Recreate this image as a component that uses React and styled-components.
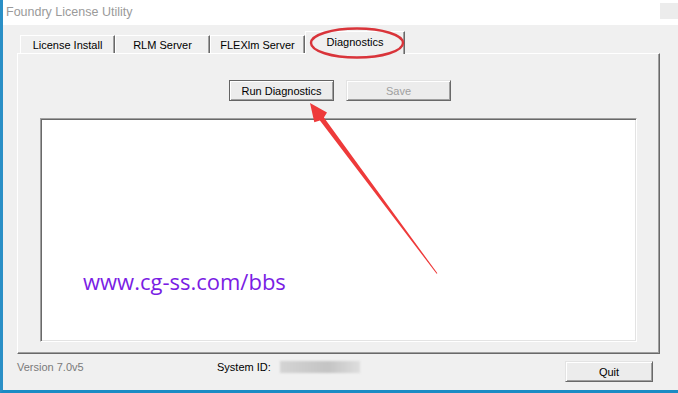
import styled, { createGlobalStyle } from 'styled-components';

const tabs = ['License Install', 'RLM Server', 'FLEXlm Server', 'Diagnostics'];

const App = () => {
  return (
    <>
      <GlobalStyle />
      <Window>
        <TitleBar>
          <Title>Foundry License Utility</Title>
          <CloseBox />
        </TitleBar>

        <Body>
          <TabStrip>
            {tabs.map((t) => (
              <Tab key={t} $active={t === 'Diagnostics'}>
                {t}
              </Tab>
            ))}
          </TabStrip>

          <Panel>
            <ButtonRow>
              <PushButton $default>Run Diagnostics</PushButton>
              <PushButton disabled>Save</PushButton>
            </ButtonRow>
            <OutputArea />
          </Panel>

          <Footer>
            <Version>Version 7.0v5</Version>
            <Label>System ID:</Label>
            <Blurred />
            <QuitButton>Quit</QuitButton>
          </Footer>
        </Body>

        <Watermark>www.cg-ss.com/bbs</Watermark>

        <Annotations viewBox="0 0 678 393">
          <ellipse
            cx="357"
            cy="43"
            rx="46"
            ry="14.5"
            fill="none"
            stroke="#d9343a"
            strokeWidth="2.4"
          />
          <polygon
            points="310,103 327,112.6 323.9,117.5 437.4,273.3 436.6,273.8 319.9,120.5 314.3,122.2"
            fill="#ee3a3a"
          />
        </Annotations>
      </Window>
    </>
  );
};

export default App;

//~~~~~~~~~~~~~~~~~~~
// Styled-Components
//~~~~~~~~~~~~~~~~~~~

const GlobalStyle = createGlobalStyle`
  html, body {
    margin: 0;
    padding: 0;
    background: #f0f0f0;
  }
  body {
    font-family: "Liberation Sans", Arial, sans-serif;
    font-size: 11px;
    color: #000;
  }
`;

const Window = styled.div`
  position: relative;
  width: 678px;
  height: 393px;
  box-sizing: border-box;
  display: flex;
  flex-direction: column;
  background: #f0f0f0;
  border-left: 3px solid #2a8fc6;
  border-bottom: 3px solid #1b8bc4;
  overflow: hidden;
`;

const TitleBar = styled.div`
  height: 25px;
  flex: none;
  display: flex;
  align-items: center;
  justify-content: space-between;
  padding-left: 3px;
  background: #fff;
`;

const Title = styled.span`
  font-size: 12.5px;
  color: #9a9a9a;
  margin-top: -1px;
`;

const CloseBox = styled.div`
  align-self: flex-start;
  width: 18px;
  height: 16px;
  margin-top: 3px;
  background: #ececec;
`;

const Body = styled.div`
  flex: 1;
  display: flex;
  flex-direction: column;
  padding: 6px 18px 0 14px;
`;

const TabStrip = styled.div`
  display: flex;
  align-items: flex-end;
  height: 22px;
  padding-left: 3px;
`;

const Tab = styled.div`
  position: relative;
  box-sizing: border-box;
  width: ${(p) => (p.$active ? '100px' : '95px')};
  height: ${(p) => (p.$active ? '23px' : '18px')};
  margin-bottom: ${(p) => (p.$active ? '-1px' : '0')};
  z-index: ${(p) => (p.$active ? 1 : 0)};
  display: flex;
  align-items: center;
  justify-content: center;
  padding-bottom: ${(p) => (p.$active ? '2px' : '0')};
  background: #f0f0f0;
  border-top: 1px solid #fff;
  border-left: 1px solid #fff;
  border-right: 1px solid #696969;
  box-shadow: inset -1px 0 0 #a0a0a0;
`;

const Panel = styled.div`
  height: 301px;
  box-sizing: border-box;
  display: flex;
  flex-direction: column;
  padding-top: 26px;
  border: 1px solid;
  border-color: #fff #696969 #696969 #fff;
  box-shadow: inset -1px -1px 0 #a0a0a0;
`;

const ButtonRow = styled.div`
  display: flex;
  justify-content: center;
  gap: 12px;
  padding-left: 3px;
`;

const PushButton = styled.button`
  width: 105px;
  height: 21px;
  box-sizing: border-box;
  padding: 0;
  font-family: inherit;
  font-size: 11px;
  color: ${(p) => (p.disabled ? '#a0a0a0' : '#000')};
  background: #ececec;
  border: 1px solid;
  border-color: ${(p) =>
    p.$default ? '#646464' : '#e3e3e3 #696969 #696969 #e3e3e3'};
  box-shadow: inset 1px 1px 0 #fff, inset -1px -1px 0 #a0a0a0;
`;

const OutputArea = styled.div`
  flex: 1;
  margin: 17px 22px 11px 22px;
  background: #fff;
  border: 1px solid;
  border-color: #a0a0a0 #fff #fff #a0a0a0;
  box-shadow: inset 1px 1px 0 #696969, inset -1px -1px 0 #e3e3e3;
`;

const Footer = styled.div`
  flex: 1;
  display: flex;
  align-items: flex-start;
  padding-top: 7px;
`;

const Version = styled.span`
  width: 200px;
  color: #7a7a7a;
  line-height: 13px;
`;

const Label = styled.span`
  line-height: 13px;
`;

const Blurred = styled.div`
  width: 80px;
  height: 12px;
  margin: 0 0 0 9px;
  background: linear-gradient(90deg, #d4d4d4, #c4c4c4 60%, #dedede);
  filter: blur(1px);
`;

const QuitButton = styled(PushButton)`
  width: 88px;
  margin-left: auto;
  margin-right: 7px;
`;

const Watermark = styled.div`
  position: absolute;
  z-index: 2;
  left: 80px;
  top: 269px;
  font-family: "Open Sans", "Noto Sans", sans-serif;
  font-size: 22px;
  line-height: 24px;
  color: #7a1de4;
`;

const Annotations = styled.svg`
  position: absolute;
  z-index: 3;
  left: -3px;
  top: 0;
  width: 678px;
  height: 393px;
  pointer-events: none;
`;
